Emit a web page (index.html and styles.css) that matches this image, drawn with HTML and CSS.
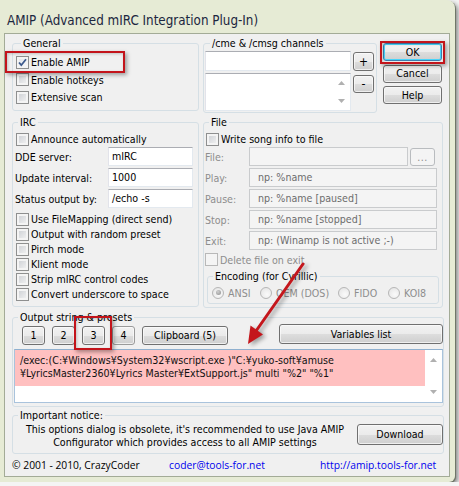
FILE: index.html
```html
<!DOCTYPE html>
<html>
<head>
<meta charset="utf-8">
<title>AMIP</title>
<link rel="stylesheet" href="styles.css">
</head>
<body>
<div class="window">
  <div class="titlebar">AMIP (Advanced mIRC Integration Plug-In)</div>
  <div class="client">
    <div class="row top">
      <fieldset class="grp general">
        <legend>General</legend>
        <div class="chk"><span class="cb checked"><svg width="11" height="11" viewBox="0 0 11 11"><path d="M2 5.5 L4.3 8.2 L9 2.3" fill="none" stroke="#3d5a8c" stroke-width="1.8"/></svg></span>Enable AMIP</div>
        <div class="chk"><span class="cb"></span>Enable hotkeys</div>
        <div class="chk"><span class="cb"></span>Extensive scan</div>
      </fieldset>
      <fieldset class="grp channels">
        <legend>/cme &amp; /cmsg channels</legend>
        <div class="chgrid">
          <div class="tb chinput"></div>
          <button class="btn small plus">+</button>
          <div class="tb listbox">
            <div class="vscroll">
              <svg width="7" height="4" viewBox="0 0 7 4"><path d="M0 4 L3.5 0 L7 4Z" fill="#b0b0b0"/></svg>
              <svg width="7" height="4" viewBox="0 0 7 4"><path d="M0 0 L3.5 4 L7 0Z" fill="#b0b0b0"/></svg>
            </div>
          </div>
          <button class="btn small minus">-</button>
        </div>
      </fieldset>
      <div class="btncol">
        <button class="btn dlg default">OK</button>
        <button class="btn dlg">Cancel</button>
        <button class="btn dlg">Help</button>
      </div>
    </div>

    <div class="row mid">
      <fieldset class="grp irc">
        <legend>IRC</legend>
        <div class="chk announce"><span class="cb"></span>Announce automatically</div>
        <div class="form">
          <label>DDE server:</label><div class="tb">mIRC</div>
          <label>Update interval:</label><div class="tb">1000</div>
          <label>Status output by:</label><div class="tb">/echo -s</div>
        </div>
        <div class="chklist">
          <div class="chk"><span class="cb"></span>Use FileMapping (direct send)</div>
          <div class="chk"><span class="cb"></span>Output with random preset</div>
          <div class="chk"><span class="cb"></span>Pirch mode</div>
          <div class="chk"><span class="cb"></span>Klient mode</div>
          <div class="chk"><span class="cb"></span>Strip mIRC control codes</div>
          <div class="chk"><span class="cb"></span>Convert underscore to space</div>
        </div>
      </fieldset>
      <fieldset class="grp file">
        <legend>File</legend>
        <div class="chk write"><span class="cb"></span>Write song info to file</div>
        <div class="fform">
          <label>File:</label><div class="frow"><div class="tb dis short"></div><button class="btn browse">...</button></div>
          <label>Play:</label><div class="frow"><div class="tb dis">np: %name</div></div>
          <label>Pause:</label><div class="frow"><div class="tb dis">np: %name [paused]</div></div>
          <label>Stop:</label><div class="frow"><div class="tb dis">np: %name [stopped]</div></div>
          <label>Exit:</label><div class="frow"><div class="tb dis">np: (Winamp is not active ;-)</div></div>
        </div>
        <div class="chk del disabled"><span class="cb"></span>Delete file on exit</div>
        <fieldset class="grp enc">
          <legend>Encoding (for Cyrillic)</legend>
          <div class="radios">
            <div class="rd r1"><span class="rb on"></span>ANSI</div>
            <div class="rd r2"><span class="rb"></span>OEM (DOS)</div>
            <div class="rd r3"><span class="rb"></span>FIDO</div>
            <div class="rd r4"><span class="rb"></span>KOI8</div>
          </div>
        </fieldset>
      </fieldset>
    </div>

    <fieldset class="grp output">
      <legend>Output string &amp; presets</legend>
      <div class="btnrow">
        <button class="btn num">1</button>
        <button class="btn num">2</button>
        <button class="btn num">3</button>
        <button class="btn num faint">4</button>
        <button class="btn clip">Clipboard (5)</button>
        <button class="btn vars">Variables list</button>
      </div>
      <div class="textarea">
        <div class="tacontent">
          <div class="pink">/exec:(C:¥Windows¥System32¥wscript.exe )"C:¥yuko-soft¥amuse<br>¥LyricsMaster2360¥Lyrics Master¥ExtSupport.js" multi "%2" "%1"</div>
        </div>
        <div class="vscroll">
          <svg width="7" height="4" viewBox="0 0 7 4"><path d="M0 4 L3.5 0 L7 4Z" fill="#b0b0b0"/></svg>
          <svg width="7" height="4" viewBox="0 0 7 4"><path d="M0 0 L3.5 4 L7 0Z" fill="#b0b0b0"/></svg>
        </div>
      </div>
    </fieldset>

    <fieldset class="grp notice">
      <legend>Important notice:</legend>
      <div class="noticebody">
        <p class="noticetext">This options dialog is obsolete, it's recommended to use Java AMIP<br>Configurator which provides access to all AMIP settings</p>
        <button class="btn download">Download</button>
      </div>
    </fieldset>

    <div class="footer">
      <span class="copy">© 2001 - 2010, CrazyCoder</span>
      <span class="link">coder@tools-for.net</span>
      <span class="link">http://amip.tools-for.net</span>
    </div>
  </div>

  <div class="mark mark-amip"></div>
  <div class="mark mark-ok"></div>
  <div class="mark mark-3"></div>
  <svg class="arrow" width="455" height="482" viewBox="0 0 455 482">
    <line x1="303" y1="264" x2="256" y2="331" stroke="#c4161c" stroke-width="3" stroke-linecap="round"/>
    <path d="M248 344 L250.5 325.5 L263 334.5 Z" fill="#c4161c"/>
  </svg>
</div>
</body>
</html>
```
FILE: styles.css
```css
html, body {
  margin: 0;
  padding: 0;
  background: #f4f4f4;
  overflow: hidden;
}

.window {
  position: relative;
  width: 455px;
  height: 482px;
  box-sizing: border-box;
  padding: 0 5px 5px 4px;
  background: #e6ebd5;
  border-radius: 0 8px 6px 0;
  box-shadow: 1px 1px 0 #6f7668, 3px 3px 5px rgba(0, 0, 0, 0.45);
  font-family: "DejaVu Sans Condensed", "Liberation Sans", sans-serif;
  font-size: 10.6px;
  color: #000;
}

.titlebar {
  height: 33px;
  box-sizing: border-box;
  padding: 7px 0 0 3px;
  display: flex;
  align-items: center;
  font-family: "DejaVu Sans Condensed", "Liberation Sans", sans-serif;
  font-size: 13.3px;
  color: #1c2740;
  white-space: nowrap;
}

.client {
  height: 444px;
  box-sizing: border-box;
  border: 1px solid #a3ab97;
  background: #f0f0f0;
  padding: 3px 0 0 7px;
}

.row {
  display: flex;
  align-items: flex-start;
}

.row.mid {
  margin-top: 3px;
}

/* group boxes */
.grp {
  margin: 0;
  padding: 0;
  min-width: 0;
  box-sizing: border-box;
  border: 1px solid #d5dfe5;
  border-radius: 3px;
}

.grp > legend {
  margin-left: 5px;
  padding: 0 2px;
  line-height: 13px;
  font-size: 10.6px;
}

.general {
  width: 187px;
  height: 74px;
  padding: 3.5px 0 0 3px;
}

.channels {
  width: 174px;
  height: 76px;
  margin-left: 4px;
  padding: 1px 0 0 1px;
}

.btncol {
  margin: 6px 0 0 6px;
  display: flex;
  flex-direction: column;
  gap: 3.5px;
}

.irc {
  width: 187px;
  height: 191px;
}

.file {
  width: 240px;
  height: 192px;
  margin-left: 4px;
}

.output {
  width: 432px;
  height: 96px;
  margin-top: 3px;
}

.notice {
  width: 432px;
  height: 45px;
  margin-top: 2px;
}

/* checkboxes */
.chk {
  display: flex;
  align-items: center;
  gap: 2px;
  height: 17.5px;
  white-space: nowrap;
}

.cb {
  width: 13px;
  height: 13px;
  box-sizing: border-box;
  border: 1px solid #8e8f8f;
  background: linear-gradient(135deg, #c9ccd1 0%, #f6f6f6 100%);
  box-shadow: inset 0 0 0 2px #f4f4f4;
  display: inline-flex;
  align-items: center;
  justify-content: center;
  flex: none;
}

.cb.checked {
  background: linear-gradient(135deg, #dfe3e8 0%, #fbfbfb 100%);
}

.chk.disabled {
  color: #8d8d8d;
}

.chk.disabled .cb {
  border-color: #b8b8b8;
  background: #f4f4f4;
  box-shadow: none;
}

/* text boxes */
.tb {
  box-sizing: border-box;
  height: 19px;
  border: 1px solid #e3e9ef;
  border-top-color: #abadb3;
  border-left-color: #e2e3ea;
  background: #fff;
  padding-left: 3px;
  line-height: 17px;
  white-space: nowrap;
  overflow: hidden;
}

.tb.dis {
  background: #f4f4f4;
  border-color: #c9cbcd;
  color: #6d6d6d;
  padding-left: 8px;
}

/* buttons */
.btn {
  box-sizing: border-box;
  margin: 0;
  padding: 0;
  border: 1px solid #707070;
  border-radius: 3px;
  background: linear-gradient(#f2f2f2 0%, #ebebeb 50%, #dddddd 50%, #cfcfcf 100%);
  box-shadow: inset 0 0 0 1px rgba(252, 252, 252, 0.7);
  font-family: "DejaVu Sans Condensed", "Liberation Sans", sans-serif;
  font-size: 10.6px;
  color: #000;
  line-height: 1;
}

.btn.dlg {
  width: 59px;
  height: 18px;
}

.btn.default {
  border-color: #3c7fb1;
  box-shadow: inset 0 0 0 1px #48d4fa;
}

.btn.small {
  width: 21px;
  font-size: 12px;
}

.chgrid {
  display: grid;
  grid-template-columns: 146px 21px;
  grid-template-rows: 20px 38px;
  column-gap: 2px;
  row-gap: 2px;
}

.chinput {
  height: 20px;
}

.plus {
  height: 19px;
  margin-top: 1px;
}

.minus {
  height: 18px;
  margin-top: 2px;
}

.listbox {
  height: 38px;
  display: flex;
  justify-content: flex-end;
  padding: 0;
}

.vscroll {
  width: 17px;
  display: flex;
  flex-direction: column;
  justify-content: space-between;
  align-items: center;
  padding: 7px 0;
  box-sizing: border-box;
  flex: none;
}

.vscroll svg {
  display: block;
}

/* IRC */
.irc .announce {
  margin: 2.5px 0 0 3px;
  height: 15px;
}

.form {
  display: grid;
  grid-template-columns: 93px 85px;
  grid-auto-rows: 19px;
  row-gap: 2px;
  margin: 0.5px 0 0 2px;
  align-items: center;
}

.form label {
  white-space: nowrap;
}

.chklist {
  margin: 3.5px 0 0 3px;
}

.chklist .chk {
  height: 15px;
}

/* File */
.file .write {
  margin: 2.5px 0 0 2px;
  height: 15px;
}

.fform {
  display: grid;
  grid-template-columns: 44px auto;
  grid-auto-rows: 19px;
  row-gap: 2px;
  margin: 0.5px 0 0 1px;
  align-items: center;
}

.fform label {
  color: #8d8d8d;
}

.frow {
  display: flex;
  gap: 2px;
  align-items: flex-start;
}

.frow .tb {
  width: 188px;
}

.frow .tb.short {
  width: 159px;
}

.btn.browse {
  width: 25px;
  height: 18px;
  margin-top: 1px;
  border-color: #b9bcbf;
  background: #f4f4f4;
  box-shadow: none;
  color: #8d8d8d;
  letter-spacing: 0.5px;
}

.file .del {
  margin: 2px 0 0 1px;
  height: 15px;
}

.enc {
  width: 232px;
  height: 34px;
  margin: 3px 0 0 3px;
}

.radios {
  display: flex;
  margin: 2px 0 0 4px;
  height: 15px;
  align-items: center;
  color: #8d8d8d;
}

.rd {
  display: flex;
  align-items: center;
  gap: 4px;
  white-space: nowrap;
}

.r1 { width: 48px; }
.r2 { width: 78px; }
.r3 { width: 50px; }

.rb {
  width: 12px;
  height: 12px;
  box-sizing: border-box;
  border: 1px solid #b6b6b6;
  border-radius: 50%;
  background: radial-gradient(circle at 60% 65%, #fafafa 0%, #e2e2e2 100%);
  flex: none;
  position: relative;
}

.rb.on::after {
  content: "";
  position: absolute;
  left: 2.5px;
  top: 2.5px;
  width: 5px;
  height: 5px;
  border-radius: 50%;
  background: radial-gradient(circle at 40% 35%, #d0d0d0, #8c8c8c);
}

/* Output */
.btnrow {
  display: flex;
  gap: 7px;
  margin-top: 2px;
  padding-left: 9px;
  height: 19px;
}

.btn.num {
  width: 23px;
  height: 19px;
}

.btn.faint {
  border-color: #9a9a9a;
}

.btn.clip {
  width: 86px;
  height: 19px;
}

.btn.vars {
  width: 164px;
  height: 20px;
  margin-left: auto;
  margin-top: -2px;
}

.textarea {
  box-sizing: border-box;
  margin: 4px 0 0 1px;
  width: 429px;
  height: 54px;
  border: 1px solid #a9c3dc;
  border-top-color: #8fb0cf;
  background: #fff;
  display: flex;
}

.tacontent {
  flex: 1;
  min-width: 0;
}

.pink {
  background: #ffc0c0;
  height: 36px;
  box-sizing: border-box;
  padding: 4px 0 0 5px;
  line-height: 12.5px;
  white-space: nowrap;
  color: #111;
}

.textarea .vscroll {
  padding: 8px 0;
}

/* Notice */
.noticebody {
  display: flex;
  align-items: flex-start;
}

.noticetext {
  margin: 0;
  width: 344px;
  text-align: center;
  line-height: 13px;
  padding-top: 0.5px;
}

.btn.download {
  width: 86px;
  height: 21px;
  margin-top: 2px;
}

/* footer */
.footer {
  margin-top: 4px;
  height: 14px;
  line-height: 14px;
  display: grid;
  grid-template-columns: 157px 151px auto;
  font-family: "Open Sans", "Noto Sans", sans-serif;
  font-size: 10.3px;
  white-space: nowrap;
}

.footer .link {
  color: #0000ee;
}

/* annotation overlays */
.mark {
  position: absolute;
  box-sizing: border-box;
  border: 2px solid #c3141b;
  box-shadow: 2px 2px 4px rgba(0, 0, 0, 0.35), inset 1px 1px 3px rgba(0, 0, 0, 0.2);
  pointer-events: none;
}

.mark-amip {
  left: 5px;
  top: 51px;
  width: 120px;
  height: 22px;
}

.mark-ok {
  left: 380px;
  top: 41px;
  width: 65px;
  height: 23px;
}

.mark-3 {
  left: 74px;
  top: 316px;
  width: 38px;
  height: 34px;
}

.arrow {
  position: absolute;
  left: 0;
  top: 0;
  pointer-events: none;
  filter: drop-shadow(3px 2px 2px rgba(0, 0, 0, 0.35));
}
```
